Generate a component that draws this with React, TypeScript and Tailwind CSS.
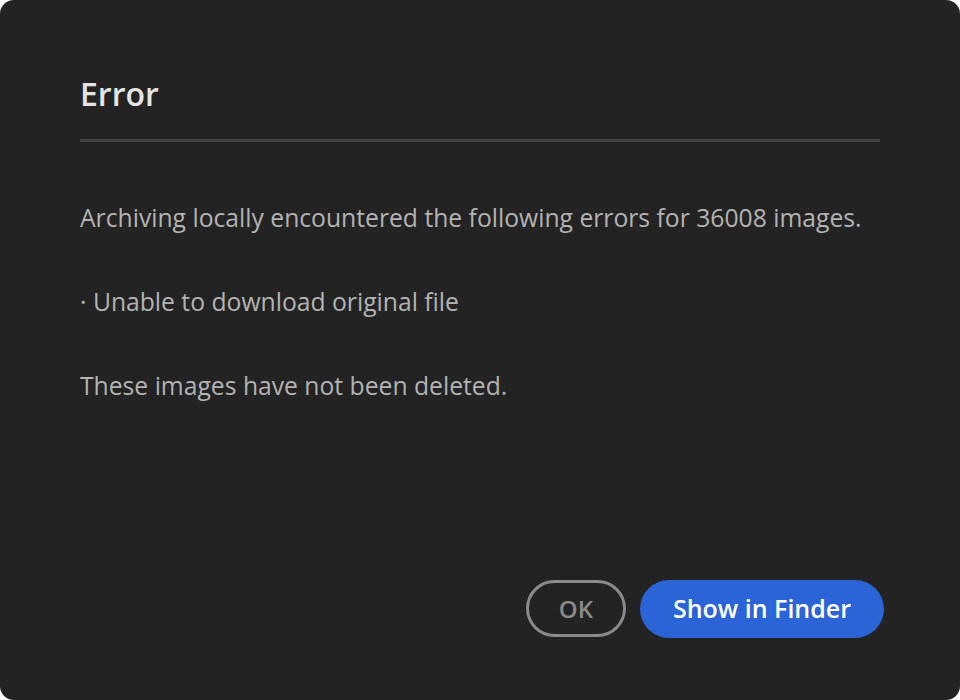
export default function App() {
  return (
    <div className="w-[960px] h-[700px] bg-white">
      <div
        className="w-full h-full bg-[#232323] rounded-[14px] flex flex-col px-[80px] pt-[74px] pb-[62px]"
        style={{ fontFamily: '"Open Sans", "Noto Sans", sans-serif' }}
      >
        <h1 className="text-[32px] leading-[40px] font-semibold text-[#e4e4e4]">Error</h1>
        <div className="mt-[25px] h-[3px] bg-[#404040]" />
        <div className="mt-[62px] flex flex-col gap-[56px] text-[24.7px] leading-[28px] text-[#b3b3b3]">
          <p>Archiving locally encountered the following errors for 36008 images.</p>
          <p>· Unable to download original file</p>
          <p>These images have not been deleted.</p>
        </div>
        <div className="mt-auto flex justify-end gap-[14px] -mr-[4px]">
          <button className="h-[57px] w-[100px] rounded-full border-[3px] border-[#8a8a8a] text-[#8a8a8a] text-[24px] font-semibold">
            OK
          </button>
          <button className="h-[58px] px-[33px] rounded-full bg-[#2a64d6] text-white text-[25px] font-semibold">
            Show in Finder
          </button>
        </div>
      </div>
    </div>
  );
}
